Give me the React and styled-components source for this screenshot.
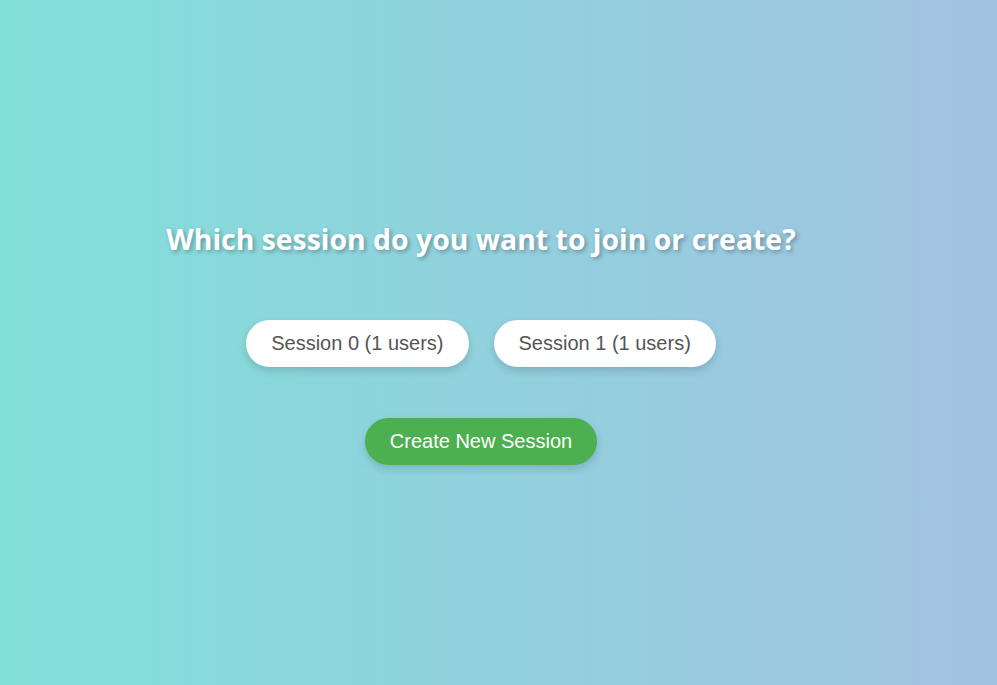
import React from "react";
import styled, { createGlobalStyle } from "styled-components";

const sessions = [
  { id: 0, users: 1 },
  { id: 1, users: 1 },
];

function App() {
  return (
    <>
      <GlobalStyle />
      <Page>
        <Heading>Which session do you want to join or create?</Heading>
        <SessionList>
          {sessions.map((s) => (
            <SessionButton key={s.id}>
              Session {s.id} ({s.users} users)
            </SessionButton>
          ))}
        </SessionList>
        <CreateButton>Create New Session</CreateButton>
      </Page>
    </>
  );
}

export default App;

const GlobalStyle = createGlobalStyle`
  html, body {
    margin: 0;
    padding: 0;
  }
  body {
    font-family: "Liberation Sans", Arial, sans-serif;
  }
`;

const Page = styled.div`
  min-height: 100vh;
  box-sizing: border-box;
  padding-right: 35px;
  display: flex;
  flex-direction: column;
  align-items: center;
  justify-content: center;
  background: linear-gradient(to right, #81e0d9, #a2c2e2);
`;

const Heading = styled.h1`
  margin: 0 0 62px;
  font-family: "Open Sans", "Noto Sans", sans-serif;
  font-weight: 700;
  font-size: 28.4px;
  color: #fff;
  text-shadow: 2px 2px 4px rgba(0, 0, 0, 0.3);
`;

const SessionList = styled.div`
  display: flex;
  gap: 25px;
  margin-bottom: 51px;
`;

const PillButton = styled.button`
  font-family: "Liberation Sans", Arial, sans-serif;
  font-size: 20px;
  line-height: 23px;
  padding: 12px 25px;
  border: none;
  border-radius: 25px;
  cursor: pointer;
  box-shadow: 0 4px 8px rgba(0, 0, 0, 0.15);
`;

const SessionButton = styled(PillButton)`
  background: #fff;
  color: #555;
`;

const CreateButton = styled(PillButton)`
  background: #4caf50;
  color: #fff;
`;
